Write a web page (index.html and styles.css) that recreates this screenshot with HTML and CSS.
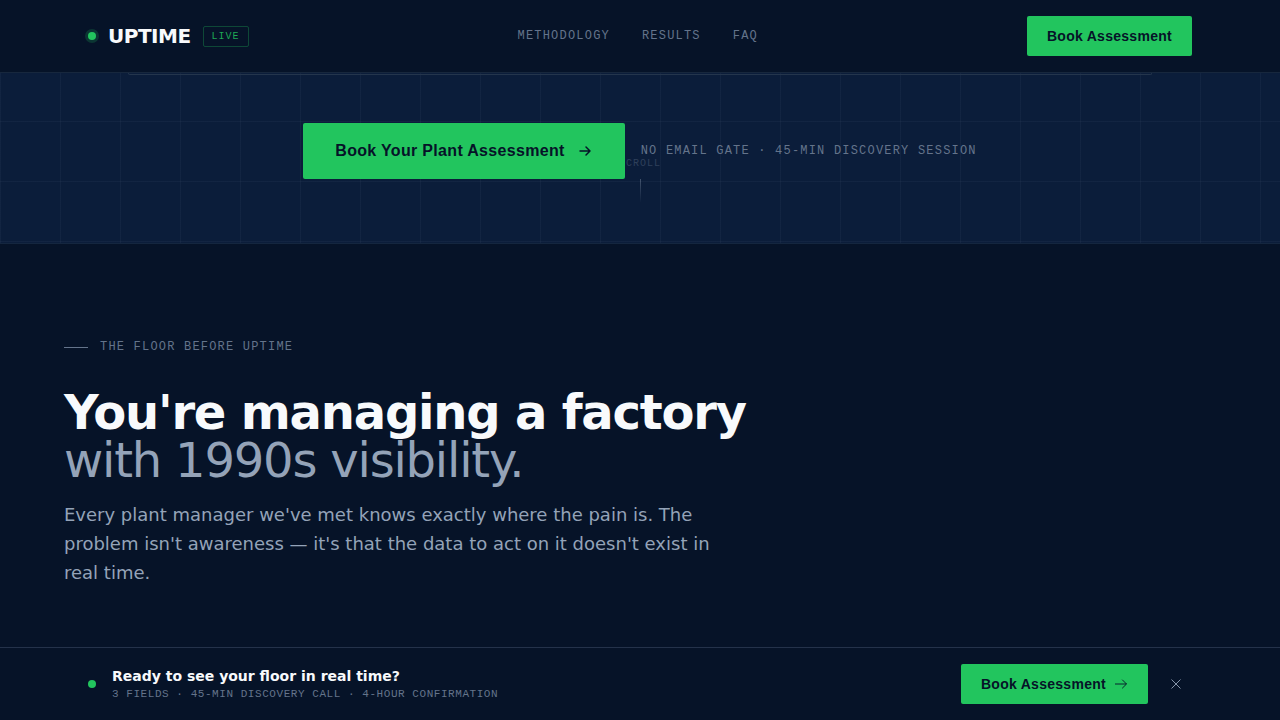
FILE: index.html
```html
<!DOCTYPE html>
<html lang="en">
<head>
    <meta charset="UTF-8">
    <meta name="viewport" content="width=device-width, initial-scale=1.0">
    <title>UPTIME</title>
    <link rel="stylesheet" href="styles.css">
</head>
<body>
    <header class="topbar">
        <a class="brand" href="#">
            <span class="dot dot-ring"></span>
            <span class="brand-name">UPTIME</span>
            <span class="badge">LIVE</span>
        </a>
        <nav class="menu">
            <a href="#methodology">METHODOLOGY</a>
            <a href="#results">RESULTS</a>
            <a href="#faq">FAQ</a>
        </nav>
        <button class="btn" type="button">Book Assessment</button>
    </header>

    <main>
        <section class="hero">
            <div class="hero-panel"></div>
            <div class="hero-cta">
                <button class="btn btn-large" type="button">
                    Book Your Plant Assessment
                    <svg width="16" height="16" viewBox="0 0 16 16" fill="none" stroke="currentColor" stroke-width="1.5" stroke-linecap="round" stroke-linejoin="round"><path d="M3 8h10M9 4l4 4-4 4"/></svg>
                </button>
                <span class="mono">NO EMAIL GATE · 45-MIN DISCOVERY SESSION</span>
            </div>
            <div class="scroll-hint">
                <span>SCROLL</span>
                <span class="scroll-line"></span>
            </div>
        </section>

        <section class="problem" id="methodology">
            <p class="eyebrow mono">THE FLOOR BEFORE UPTIME</p>
            <h2>You're managing a factory<br><span class="muted">with 1990s visibility.</span></h2>
            <p class="lead">Every plant manager we've met knows exactly where the pain is. The problem isn't awareness — it's that the data to act on it doesn't exist in real time.</p>
        </section>
    </main>

    <aside class="bottombar">
        <span class="dot"></span>
        <div class="bottombar-text">
            <p class="bottombar-title">Ready to see your floor in real time?</p>
            <p class="bottombar-note">3 FIELDS · 45-MIN DISCOVERY CALL · 4-HOUR CONFIRMATION</p>
        </div>
        <button class="btn" type="button">
            Book Assessment
            <svg width="14" height="14" viewBox="0 0 14 14" fill="none" stroke="currentColor" stroke-width="0.9"><path d="M1 7h11.5M8.2 2.7L12.5 7l-4.3 4.3"/></svg>
        </button>
        <button class="close" type="button" aria-label="Dismiss">
            <svg width="14" height="14" viewBox="0 0 14 14" fill="none" stroke="currentColor" stroke-width="0.9"><path d="M2.5 2.5l9 9M11.5 2.5l-9 9"/></svg>
        </button>
    </aside>
</body>
</html>
```
FILE: styles.css
```css
* {
    box-sizing: border-box;
}

body {
    font-family: "DejaVu Sans", sans-serif;
    margin: 0;
    min-height: 100vh;
    display: flex;
    flex-direction: column;
    background-color: #061328;
    color: #f8fafc;
}

main {
    flex: 1;
}

h2,
p {
    margin: 0;
}

a {
    color: inherit;
    text-decoration: none;
}

.topbar {
    position: sticky;
    top: 0;
    z-index: 10;
    display: flex;
    align-items: center;
    justify-content: space-between;
    padding: 16px 88px;
    background-color: #061328;
    border-bottom: 1px solid #17273d;
}

.brand {
    display: flex;
    align-items: center;
    gap: 12px;
}

.dot {
    width: 8px;
    height: 8px;
    border-radius: 50%;
    background-color: #22c55e;
}

.dot-ring {
    box-shadow: 0 0 0 3px rgba(34, 197, 94, 0.2);
}

.brand-name {
    font-size: 20px;
    font-weight: bold;
    letter-spacing: -0.025em;
}

.badge {
    padding: 4px 8px;
    border: 1px solid rgba(34, 197, 94, 0.3);
    border-radius: 2px;
    font-family: "Liberation Mono", monospace;
    font-size: 10px;
    letter-spacing: 0.1em;
    color: rgba(34, 197, 94, 0.85);
}

.menu {
    display: flex;
    gap: 32px;
    font-family: "Liberation Mono", monospace;
    font-size: 12px;
    letter-spacing: 0.1em;
    color: #64748b;
}

.btn {
    display: flex;
    align-items: center;
    gap: 8px;
    height: 40px;
    padding: 0 20px;
    border: none;
    border-radius: 2px;
    background-color: #22c55e;
    color: #061328;
    font-family: "Liberation Sans", sans-serif;
    font-size: 14px;
    font-weight: bold;
    letter-spacing: 0.02em;
    white-space: nowrap;
    cursor: pointer;
}

.btn-large {
    height: 56px;
    padding: 0 32px;
    gap: 12px;
    font-size: 16px;
    z-index: 1;
}

.mono {
    font-family: "Liberation Mono", monospace;
    font-size: 12px;
    letter-spacing: 0.1em;
    color: #64748b;
}

.hero {
    position: relative;
    padding: 0 128px 64px;
    background-color: #0b1d3a;
    background-image:
        linear-gradient(rgba(148, 163, 184, 0.06) 1px, transparent 1px),
        linear-gradient(90deg, rgba(148, 163, 184, 0.06) 1px, transparent 1px);
    background-size: 60px 60px;
    background-position: 0 -12px;
    border-bottom: 1px solid #14263f;
}

.hero-panel {
    height: 2px;
    border: 1px solid #24354c;
    border-top: none;
    border-radius: 0 0 2px 2px;
}

.hero-cta {
    display: flex;
    align-items: center;
    justify-content: center;
    gap: 16px;
    padding-top: 48px;
}

.scroll-hint {
    position: absolute;
    bottom: 32px;
    left: 50%;
    transform: translateX(-50%);
    display: flex;
    flex-direction: column;
    align-items: center;
    gap: 8px;
    font-family: "Liberation Mono", monospace;
    font-size: 10px;
    line-height: 14px;
    letter-spacing: 0.1em;
    color: #64748b;
    opacity: 0.4;
}

.scroll-line {
    width: 1px;
    height: 32px;
    background: linear-gradient(#94a3b8, transparent 75%);
}

.problem {
    padding: 96px 64px 48px;
}

.eyebrow {
    display: flex;
    align-items: center;
    gap: 12px;
    line-height: 15px;
}

.eyebrow::before {
    content: "";
    width: 24px;
    height: 1px;
    background-color: #64748b;
}

h2 {
    margin-top: 33px;
    font-size: 48px;
    line-height: 48px;
    letter-spacing: -0.025em;
}

.muted {
    font-weight: normal;
    color: #94a3b8;
}

.lead {
    margin-top: 16px;
    max-width: 672px;
    font-size: 18px;
    line-height: 29px;
    color: #94a3b8;
}

.bottombar {
    position: sticky;
    bottom: 0;
    display: flex;
    align-items: center;
    padding: 16px 88px;
    background-color: #061328;
    border-top: 1px solid #24324a;
}

.bottombar-text {
    flex: 1;
    margin-left: 16px;
}

.bottombar-title {
    font-size: 14px;
    font-weight: bold;
    line-height: 20px;
}

.bottombar-note {
    font-family: "Liberation Mono", monospace;
    font-size: 11px;
    line-height: 16px;
    letter-spacing: 0.05em;
    color: #64748b;
}

.close {
    display: flex;
    align-items: center;
    justify-content: center;
    width: 32px;
    height: 32px;
    margin-left: 12px;
    padding: 0;
    border: none;
    background: none;
    color: #94a3b8;
    cursor: pointer;
}
```
